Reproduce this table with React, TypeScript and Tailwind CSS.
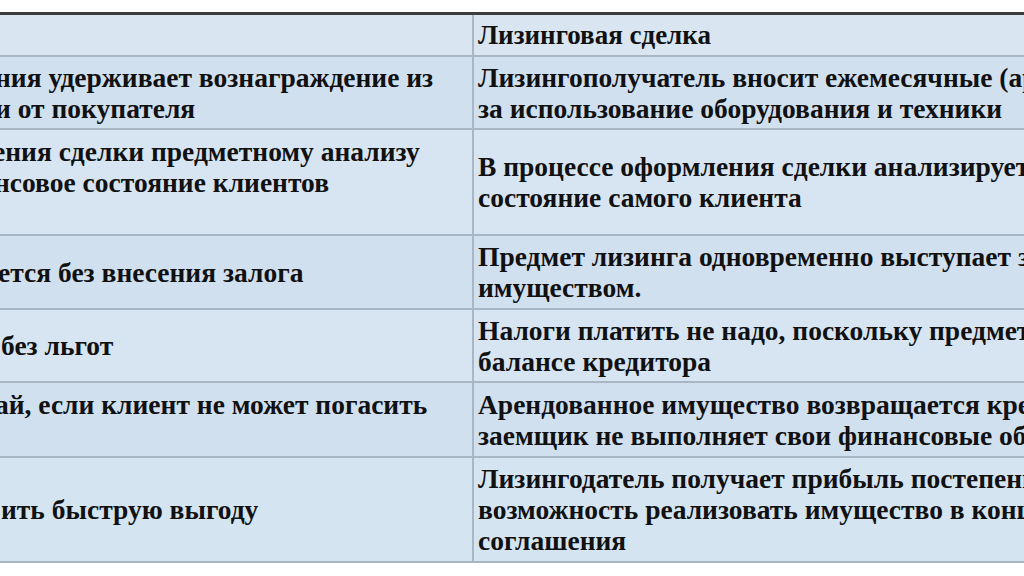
import React from "react";

type Row = {
  height: string;
  bg: string;
  left: { text: string; shift: string }[];
  right: string[];
};

const rows: Row[] = [
  {
    height: "h-[73px]",
    bg: "bg-[#d0e0ef]",
    left: [
      { text: "ния удерживает вознаграждение из", shift: "-ml-[5px]" },
      { text: "и от покупателя", shift: "-ml-[5px]" },
    ],
    right: [
      "Лизингополучатель вносит ежемесячные (арендные) платежи",
      "за использование оборудования и техники",
    ],
  },
  {
    height: "h-[106px]",
    bg: "bg-[#d7e5f2]",
    left: [
      { text: "ения сделки предметному анализу", shift: "-ml-[7px]" },
      { text: "нсовое состояние клиентов", shift: "-ml-[6px]" },
      { text: "\u00a0", shift: "" },
    ],
    right: [
      "В процессе оформления сделки анализируется финансовое",
      "состояние самого клиента",
    ],
  },
  {
    height: "h-[74px]",
    bg: "bg-[#d0e0ef]",
    left: [{ text: "ется без внесения залога", shift: "-ml-[2px]" }],
    right: ["Предмет лизинга одновременно выступает залоговым", "имуществом."],
  },
  {
    height: "h-[73px]",
    bg: "bg-[#d7e5f2]",
    left: [{ text: "без льгот", shift: "ml-[1px]" }],
    right: ["Налоги платить не надо, поскольку предмет лизинга на", "балансе кредитора"],
  },
  {
    height: "h-[75px]",
    bg: "bg-[#d0e0ef]",
    left: [
      { text: "ай, если клиент не может погасить", shift: "-ml-[5px]" },
      { text: "\u00a0", shift: "" },
    ],
    right: [
      "Арендованное имущество возвращается кредитору, если",
      "заемщик не выполняет свои финансовые обязательства",
    ],
  },
  {
    height: "h-[105px]",
    bg: "bg-[#d5e4f1]",
    left: [{ text: "ить быструю выгоду", shift: "ml-[1px]" }],
    right: [
      "Лизингодатель получает прибыль постепенно, а также",
      "возможность реализовать имущество в конце срока",
      "соглашения",
    ],
  },
];

function Lines({ lines }: { lines: { text: string; shift: string }[] }) {
  return (
    <div className="flex flex-col">
      {lines.map((l, i) => (
        <div key={i} className={`whitespace-nowrap ${l.shift}`}>
          {l.text}
        </div>
      ))}
    </div>
  );
}

export default function App() {
  return (
    <div className="w-[1024px] h-[576px] overflow-hidden bg-white pt-[12px] text-[#111111] font-['Liberation_Serif','DejaVu_Serif',serif] font-bold text-[27.5px] leading-[31px]">
      <div className="border-t-[3px] border-[#3c3c3c]">
        <div className="flex h-[42px] bg-[#d9e6f2] border-b-2 border-[#a9b6c3]">
          <div className="w-[472px] shrink-0" />
          <div className="flex-1 flex items-center pl-[4px] border-l-2 border-[#a9b6c3] overflow-hidden text-[27px]">
            <span className="whitespace-nowrap">Лизинговая сделка</span>
          </div>
        </div>
        {rows.map((row, i) => (
          <div key={i} className={`flex ${row.height} ${row.bg} border-b-2 border-[#a9b6c3]`}>
            <div className="w-[472px] shrink-0 flex items-center overflow-hidden">
              <Lines lines={row.left} />
            </div>
            <div className="flex-1 min-w-0 flex items-center pl-[4px] border-l-2 border-[#a9b6c3] overflow-hidden">
              <div className="flex flex-col">
                {row.right.map((t, j) => (
                  <div key={j} className="whitespace-nowrap">
                    {t}
                  </div>
                ))}
              </div>
            </div>
          </div>
        ))}
      </div>
    </div>
  );
}
